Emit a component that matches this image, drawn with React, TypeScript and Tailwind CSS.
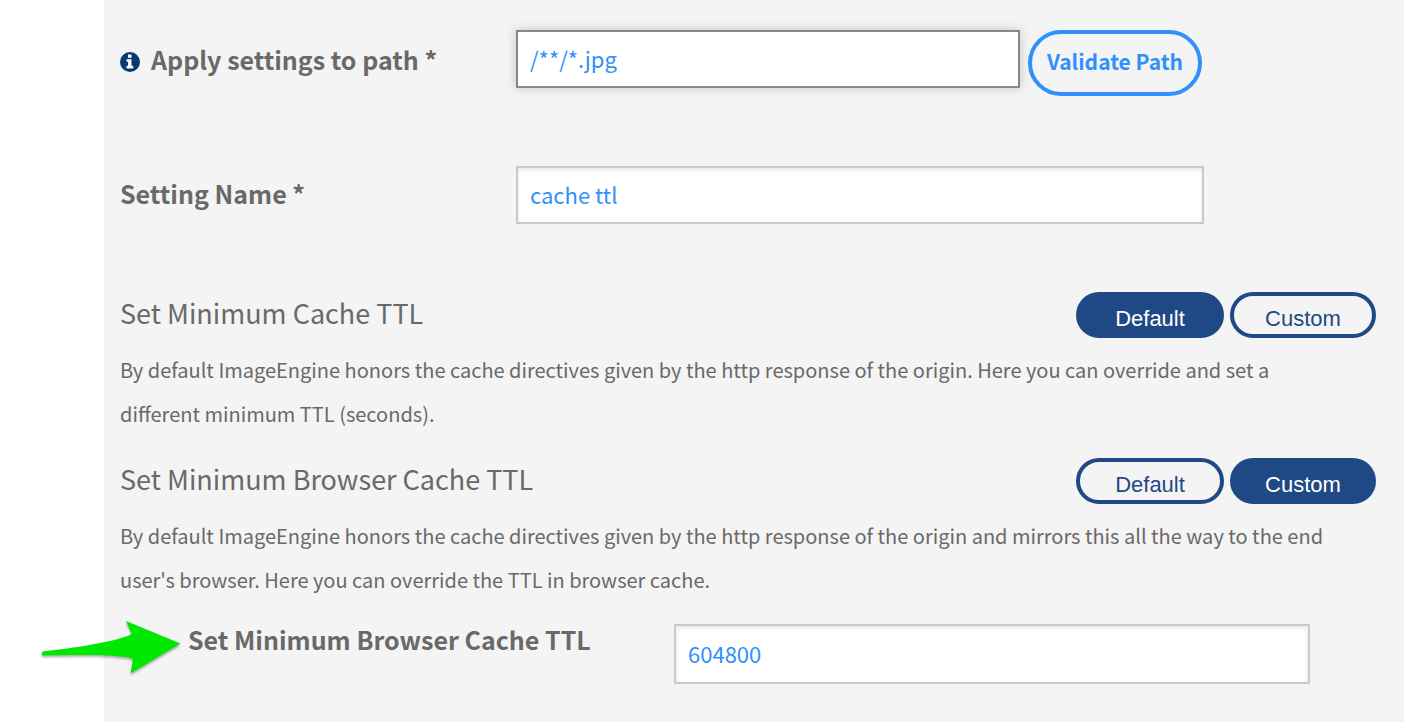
import type { ReactNode } from 'react';
import clsx from 'clsx';

type TtlMode = 'default' | 'custom';

const inputBase =
  'block w-full min-w-0 border-2 bg-white px-3 pb-0.5 text-[22px] text-[#3090fc] outline-none';
const inputIdle = 'border-[#cacaca] shadow-[inset_0_2px_4px_rgba(0,0,0,0.1)]';

interface ModeButtonProps {
  active: boolean;
  className: string;
  children: ReactNode;
}

function ModeButton({ active, className, children }: ModeButtonProps) {
  return (
    <button
      type="button"
      aria-pressed={active}
      className={clsx(
        "h-[46px] rounded-full border-4 border-[#1f4985] pt-2 font-['Liberation_Sans',sans-serif] text-[22px] leading-[30px]",
        active ? 'bg-[#1f4985] text-white' : 'bg-transparent text-[#1f4985]',
        className,
      )}
    >
      {children}
    </button>
  );
}

interface TtlSectionProps {
  title: string;
  mode: TtlMode;
  children: ReactNode;
}

/** Heading with its Default / Custom switch, and the help text below. */
function TtlSection({ title, mode, children }: TtlSectionProps) {
  return (
    <section>
      <div className="flex h-[46px] items-start justify-between">
        <h2 className="text-[27px] leading-[42px]">{title}</h2>
        <div role="group" aria-label={title} className="flex shrink-0 gap-1.5">
          <ModeButton active={mode === 'default'} className="w-[148px]">
            Default
          </ModeButton>
          <ModeButton active={mode === 'custom'} className="w-[146px]">
            Custom
          </ModeButton>
        </div>
      </div>
      <p className="mt-2.5 pr-7 text-[20px] leading-[44px]">{children}</p>
    </section>
  );
}

function InfoIcon() {
  return (
    <svg viewBox="0 0 20 20" className="size-5 shrink-0" aria-hidden="true">
      <circle cx="10" cy="10" r="10" fill="#063a70" />
      <path
        fill="#fff"
        d="M8 2.500h3.500v3.300H8zM6.500 7.200h5v6.500h1.700v2.700H6.500v-2.700h1.600V9.800H6.500z"
      />
    </svg>
  );
}

/** Callout arrow that overlaps the panel edge and points at the TTL field. */
function PointerArrow() {
  return (
    <svg
      viewBox="0 0 146 62"
      className="absolute -top-1.5 -left-20 h-[62px] w-[146px] drop-shadow-[0_2px_1px_rgba(0,0,0,0.3)]"
      aria-hidden="true"
    >
      <path
        fill="#00e800"
        d="M2.500 33.500C36 30 70 24 86 18.500C89 17.500 91 16.500 91.500 15.500L86 3L140.500 25.500L90.500 55.500L93 41C83 36.500 44 36.500 2.500 37.500Q1 35.500 2.500 33.500Z"
      />
    </svg>
  );
}

export default function App() {
  return (
    <div className="min-h-screen bg-white pl-[104px] font-['Noto_Sans_CJK_SC',sans-serif] text-[#696969]">
      <main className="min-h-screen bg-[#f4f4f4] pt-[30px] pr-7 pb-9 pl-4">
        <form onSubmit={(e) => e.preventDefault()}>
          {/* Path */}
          <div className="flex items-start">
            <label
              htmlFor="path"
              className="flex w-[396px] shrink-0 items-start gap-[11px] text-[25px] leading-[58px] font-bold"
            >
              <span className="flex h-16 items-center">
                <InfoIcon />
              </span>
              Apply settings to path *
            </label>
            <div className="flex flex-1 items-start gap-2">
              <div className="w-full max-w-[504px]">
                <input
                  id="path"
                  type="text"
                  defaultValue="/**/*.jpg"
                  className={clsx(
                    inputBase,
                    'h-[58px] border-[#888888] shadow-[0_0_10px_rgba(0,0,0,0.2)]',
                  )}
                />
              </div>
              <button
                type="button"
                className="h-[66px] w-[174px] shrink-0 rounded-full border-4 border-[#3090fc] pb-0.5 text-[21px] font-bold text-[#3090fc]"
              >
                Validate Path
              </button>
            </div>
          </div>

          {/* Name */}
          <div className="mt-[70px] flex items-start">
            <label
              htmlFor="name"
              className="w-[396px] shrink-0 text-[25px] leading-[54px] font-bold"
            >
              Setting Name *
            </label>
            <div className="w-full max-w-[688px]">
              <input
                id="name"
                type="text"
                defaultValue="cache ttl"
                className={clsx(inputBase, inputIdle, 'h-[58px]')}
              />
            </div>
          </div>

          <div className="mt-[68px] flex flex-col gap-[22px]">
            <TtlSection title="Set Minimum Cache TTL" mode="default">
              By default ImageEngine honors the cache directives given by the http response of the
              origin. Here you can override and set a different minimum TTL (seconds).
            </TtlSection>
            <div>
              <TtlSection title="Set Minimum Browser Cache TTL" mode="custom">
                By default ImageEngine honors the cache directives given by the http response of
                the origin and mirrors this all the way to the end user&apos;s browser. Here you
                can override the TTL in browser cache.
              </TtlSection>

              {/* Custom value */}
              <div className="relative mt-[22px] flex items-start">
                <PointerArrow />
                <label
                  htmlFor="browser-ttl"
                  className="w-[554px] shrink-0 pl-[68px] text-[25px] leading-[30px] font-bold"
                >
                  Set Minimum Browser Cache TTL
                </label>
                <div className="w-full max-w-[636px]">
                  <input
                    id="browser-ttl"
                    type="text"
                    inputMode="numeric"
                    defaultValue="604800"
                    className={clsx(inputBase, inputIdle, 'h-[60px]')}
                  />
                </div>
              </div>
            </div>
          </div>
        </form>
      </main>
    </div>
  );
}
